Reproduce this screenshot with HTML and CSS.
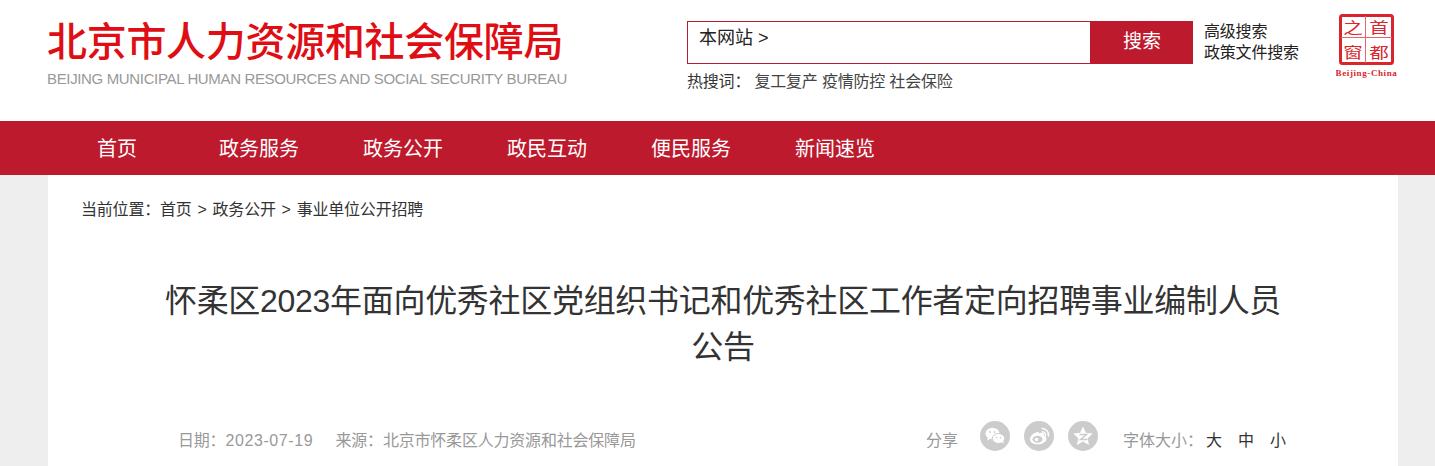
FILE: index.html
```html
<!DOCTYPE html>
<html lang="zh-CN">
<head>
    <meta charset="UTF-8">
    <title>怀柔区2023年面向优秀社区党组织书记和优秀社区工作者定向招聘事业编制人员公告</title>
    <link rel="stylesheet" href="styles.css">
</head>
<body>
    <div class="header">
        <div class="logo">
            <div class="logo-cn">北京市人力资源和社会保障局</div>
            <div class="logo-en">BEIJING MUNICIPAL HUMAN RESOURCES AND SOCIAL SECURITY BUREAU</div>
        </div>
        <div class="search">
            <div class="search-row">
                <div class="search-box">
                    <div class="search-input">本网站 &gt;</div>
                    <div class="search-btn">搜索</div>
                </div>
                <div class="search-links">
                    <a href="#">高级搜索</a>
                    <a href="#">政策文件搜索</a>
                </div>
            </div>
            <div class="hot">
                <span class="hot-label">热搜词：</span>
                <a href="#">复工复产</a>
                <a href="#">疫情防控</a>
                <a href="#">社会保险</a>
            </div>
        </div>
        <div class="seal">
            <svg width="62" height="68" viewBox="0 0 62 68">
                <rect x="4.500" y="2.500" width="52" height="48" rx="2" fill="#fff" stroke="#d8262c" stroke-width="3"/>
                <path d="M29.500 3V50M5 24.500H56" stroke="#e2686c" stroke-width="1" fill="none"/>
                <text transform="translate(43 20) scale(1.3 1)" class="seal-char">首</text>
                <text transform="translate(43 45) scale(1.3 1)" class="seal-char">都</text>
                <text transform="translate(17 20) scale(1.3 1)" class="seal-char">之</text>
                <text transform="translate(17 45) scale(1.3 1)" class="seal-char">窗</text>
                <text x="30.500" y="63" class="seal-en">Beijing-China</text>
            </svg>
        </div>
    </div>

    <div class="navbar">
        <a href="#" class="nav-home">首页</a>
        <a href="#">政务服务</a>
        <a href="#">政务公开</a>
        <a href="#">政民互动</a>
        <a href="#">便民服务</a>
        <a href="#">新闻速览</a>
    </div>

    <div class="page">
        <div class="container">
            <div class="crumbs">
                <span>当前位置：</span><a href="#">首页</a>
                <span class="sep">&gt;</span><a href="#">政务公开</a>
                <span class="sep">&gt;</span><a href="#">事业单位公开招聘</a>
            </div>
            <h1 class="title">怀柔区2023年面向优秀社区党组织书记和优秀社区工作者定向招聘事业编制人员公告</h1>
            <div class="meta">
                <div class="meta-left">
                    <span class="meta-date">日期：<span class="date-num">2023-07-19</span></span>
                    <span>来源：北京市怀柔区人力资源和社会保障局</span>
                </div>
                <div class="meta-right">
                    <span class="share-label">分享</span>
                    <div class="share-icons">
                        <a href="#" class="share-icon" title="微信">
                            <svg width="30" height="30" viewBox="0 0 30 30">
                                <ellipse cx="12.500" cy="12.500" rx="7" ry="5.800" fill="#fff"/>
                                <path d="M8 16.500l-1 3 3.500-1.800z" fill="#fff"/>
                                <ellipse cx="18.500" cy="17.500" rx="6.200" ry="5" fill="#fff" stroke="#ccc" stroke-width="1"/>
                                <path d="M21.500 21l2 2-.3-3z" fill="#fff"/>
                                <circle cx="10" cy="11" r=".9" fill="#ccc"/>
                                <circle cx="14.500" cy="11" r=".9" fill="#ccc"/>
                                <circle cx="16.500" cy="16.500" r=".8" fill="#ccc"/>
                                <circle cx="20.500" cy="16.500" r=".8" fill="#ccc"/>
                            </svg>
                        </a>
                        <a href="#" class="share-icon" title="微博">
                            <svg width="30" height="30" viewBox="0 0 30 30">
                                <path d="M13.500 11c-4 .8-7.500 4-7.500 7.500 0 3 3.500 4.800 7.500 4.800 5 0 9-2.600 9-5.600 0-2-2-2.700-2.700-2.900.6-1.500.2-2.600-1-3-1.200-.3-3 .2-4 .8.200-1.500-.2-1.900-1.800-1.600z" fill="#fff"/>
                                <ellipse cx="13.500" cy="18.300" rx="5" ry="3.500" fill="#ccc"/>
                                <circle cx="12.500" cy="18.500" r="1.800" fill="#fff"/>
                                <path d="M18 7.500a6.500 6.500 0 0 1 6.500 7.500M18.500 10.800a3.200 3.200 0 0 1 3 4" fill="none" stroke="#fff" stroke-width="1.500" stroke-linecap="round"/>
                            </svg>
                        </a>
                        <a href="#" class="share-icon" title="QQ空间">
                            <svg width="30" height="30" viewBox="0 0 30 30">
                                <path d="M15 5.500l2.900 6.200 6.800.9-5 4.600 1.300 6.800-6-3.400-6 3.400 1.300-6.800-5-4.600 6.800-.9z" fill="#fff"/>
                                <path d="M11.500 13.500h7l-6 5h7" fill="none" stroke="#ccc" stroke-width="1.500"/>
                            </svg>
                        </a>
                    </div>
                    <span class="size-label">字体大小：</span>
                    <div class="sizes">
                        <a href="#">大</a>
                        <a href="#">中</a>
                        <a href="#">小</a>
                    </div>
                </div>
            </div>
        </div>
    </div>
</body>
</html>
```

FILE: styles.css
```css
* { box-sizing: border-box; }
body { margin: 0; background-color: #eeeeee; color: #333; font-family: "Liberation Sans", "Noto Sans CJK SC", sans-serif; font-size: 16px; overflow: hidden; }
a { color: inherit; text-decoration: none; }

.header { height: 121px; background-color: white; display: flex; padding-left: 47px; }
.logo { width: 640px; padding-top: 19px; }
.logo-cn { color: #df0e14; font-size: 40px; line-height: 46px; font-weight: 500; letter-spacing: -0.3px; white-space: nowrap; }
.logo-en { margin-top: 5px; color: #999; font-size: 15px; line-height: 18px; letter-spacing: -0.35px; white-space: nowrap; }

.search { width: 649px; padding-top: 21px; }
.search-row { display: flex; }
.search-box { display: flex; width: 506px; height: 43px; }
.search-input { flex: 1; border: 1px solid #bd1a2d; border-right: none; padding: 3px 11px; font-size: 18px; line-height: 26px; color: #222; }
.search-btn { width: 103px; background-color: #bd1a2d; color: white; font-size: 19px; line-height: 42px; text-align: center; padding-left: 1px; }
.search-links { margin-left: 11px; }
.search-links a { display: block; color: #222; font-size: 16px; letter-spacing: -0.2px; line-height: 21px; white-space: nowrap; }
.hot { margin-top: 7px; font-size: 16px; letter-spacing: -0.2px; line-height: 22px; color: #444; white-space: nowrap; }
.hot-label { color: #333; }

.seal { padding-top: 13px; }
.seal-char { fill: #d8262c; font-size: 15px; text-anchor: middle; font-family: "Noto Sans CJK SC", sans-serif; }
.seal-en { fill: #d8262c; font-size: 9px; font-weight: bold; letter-spacing: 0.6px; text-anchor: middle; font-family: "Liberation Serif", serif; }

.navbar { height: 54px; background-color: #bd1a2d; color: white; display: flex; gap: 64px; padding-left: 97px; font-size: 20px; line-height: 56px; }
.nav-home { margin-right: 18px; }

.page { padding: 0 37px 0 48px; }
.container { height: 291px; background-color: white; padding: 24px 33px 0; overflow: hidden; }
.crumbs { font-size: 16px; letter-spacing: -0.2px; line-height: 22px; color: #333; }
.crumbs .sep { margin: 0 6px 0 1.5px; }

.title { margin: 57px auto 0; width: 1130px; text-align: center; font-size: 32px; font-weight: normal; letter-spacing: -0.3px; line-height: 46px; color: #333; }

.meta { display: flex; justify-content: space-between; margin-top: 54px; padding: 0 79px 0 97px; color: #999; font-size: 16px; height: 30px; align-items: center; }
.meta-left { letter-spacing: -0.2px; }
.meta-date { margin-right: 18px; }
.date-num { letter-spacing: 0.6px; }
.meta-right { display: flex; align-items: center; }
.share-icons { display: flex; gap: 14px; margin: 0 25px 6px 22px; }
.share-icon { display: block; width: 30px; height: 30px; border-radius: 50%; background-color: #cccccc; }
.share-icon svg { display: block; }
.sizes { display: flex; gap: 16px; margin-left: 3px; color: #333; }
```
